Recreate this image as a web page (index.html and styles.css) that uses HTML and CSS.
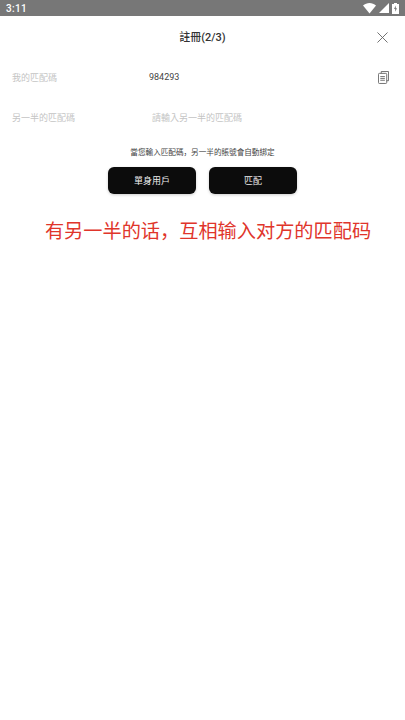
FILE: index.html
```html
<!DOCTYPE html>
<html lang="zh-Hant">
<head>
  <meta charset="UTF-8">
  <meta name="viewport" content="width=device-width, initial-scale=1.0">
  <title>註冊(2/3)</title>
  <link rel="stylesheet" href="styles.css">
</head>
<body>
  <div class="status-bar">
    <span class="status-time">3:11</span>
    <div class="status-icons">
      <svg width="13" height="11" viewBox="0 0 13 11"><path d="M0 2.6C3.6-.8 9.400-.8 13 2.600L6.500 10.500Z" fill="#fff"/></svg>
      <svg width="10" height="10" viewBox="0 0 10 10"><path d="M10 0V10H0Z" fill="#fff"/></svg>
      <svg class="battery" width="7" height="11" viewBox="0 0 7 11"><path d="M2 0H5V1H7V11H0V1H2Z" fill="#fff"/><path d="M3.800 2.500L2 6H3.200V8.800L5 5.200H3.800Z" fill="#777"/></svg>
    </div>
  </div>

  <header class="title-bar">
    <h1>註冊(2/3)</h1>
    <button class="close-button" aria-label="關閉">
      <svg width="11" height="11" viewBox="0 0 12 12"><path d="M.5.500L11.500 11.500M11.500.500L.5 11.500" stroke="#666" stroke-width="1" fill="none"/></svg>
    </button>
  </header>

  <div class="form-row code-row">
    <span class="row-label">我的匹配碼</span>
    <span class="row-value">984293</span>
    <svg class="copy-icon" width="11" height="13" viewBox="0 0 12 14" fill="none" stroke="#666" stroke-width="1"><path d="M3.500 2.500V.5H11.500V10.500H9.500"/><rect x=".5" y="2.500" width="9" height="11" rx="1"/><path d="M2.500 6H7.500M2.500 8H7.500M2.500 10H7.500"/></svg>
  </div>

  <div class="form-row partner-row">
    <span class="row-label">另一半的匹配碼</span>
    <span class="row-placeholder">請輸入另一半的匹配碼</span>
  </div>

  <p class="hint" lang="zh-Hans">當您輸入匹配碼，另一半的賬號會自動綁定</p>

  <div class="actions">
    <button class="action-button">單身用戶</button>
    <button class="action-button">匹配</button>
  </div>

  <p class="caption" lang="zh-Hans">有另一半的话，互相输入对方的匹配码</p>
</body>
</html>
```

FILE: styles.css
```css
* {
  box-sizing: border-box;
}
html, body {
  height: 100%;
}
body {
  margin: 0;
  background-color: #fff;
  color: #333;
  font-family: "Roboto", "Noto Sans CJK TC", sans-serif;
  overflow: hidden;
}
.status-bar {
  display: flex;
  justify-content: space-between;
  align-items: center;
  height: 16px;
  padding: 0 6px 0 6px;
  background-color: #777;
  color: #fff;
}
.status-time {
  font-size: 10px;
  font-weight: 500;
  letter-spacing: 0.3px;
}
.status-icons {
  display: flex;
  align-items: center;
  gap: 3px;
}
.title-bar {
  position: relative;
  display: flex;
  justify-content: center;
  align-items: center;
  height: 41px;
  padding-bottom: 2px;
}
.title-bar h1 {
  margin: 0;
  font-size: 11px;
  font-weight: 500;
  color: #333;
}
.close-button {
  position: absolute;
  right: 17px;
  top: 16px;
  display: flex;
  padding: 0;
  background: none;
  border: none;
}
.form-row {
  display: flex;
  align-items: center;
  padding-left: 12px;
  font-size: 9px;
}
.code-row {
  height: 40px;
}
.partner-row {
  height: 40px;
}
.row-label {
  color: #c4c4c4;
}
.code-row .row-label {
  width: 137px;
}
.partner-row .row-label {
  width: 140px;
}
.row-value {
  color: #444;
}
.row-placeholder {
  color: #c4c4c4;
}
.copy-icon {
  margin-left: auto;
  margin-right: 16px;
}
.hint {
  margin: 10px 0 0;
  text-align: center;
  font-size: 7.6px;
  line-height: 12px;
  color: #444;
}
.actions {
  display: flex;
  justify-content: center;
  gap: 13px;
  margin-top: 8px;
}
.action-button {
  width: 88px;
  height: 27px;
  background-color: #0c0c0c;
  color: #eee;
  border: none;
  border-radius: 6px;
  box-shadow: 0 1px 3px rgba(0, 0, 0, 0.2);
  font-family: inherit;
  font-size: 9px;
}
.caption {
  margin: 22px 0 0;
  padding-left: 11px;
  text-align: center;
  font-size: 19.200px;
  line-height: 28px;
  color: #e0352b;
  font-family: "Noto Sans CJK SC", sans-serif;
}
```
